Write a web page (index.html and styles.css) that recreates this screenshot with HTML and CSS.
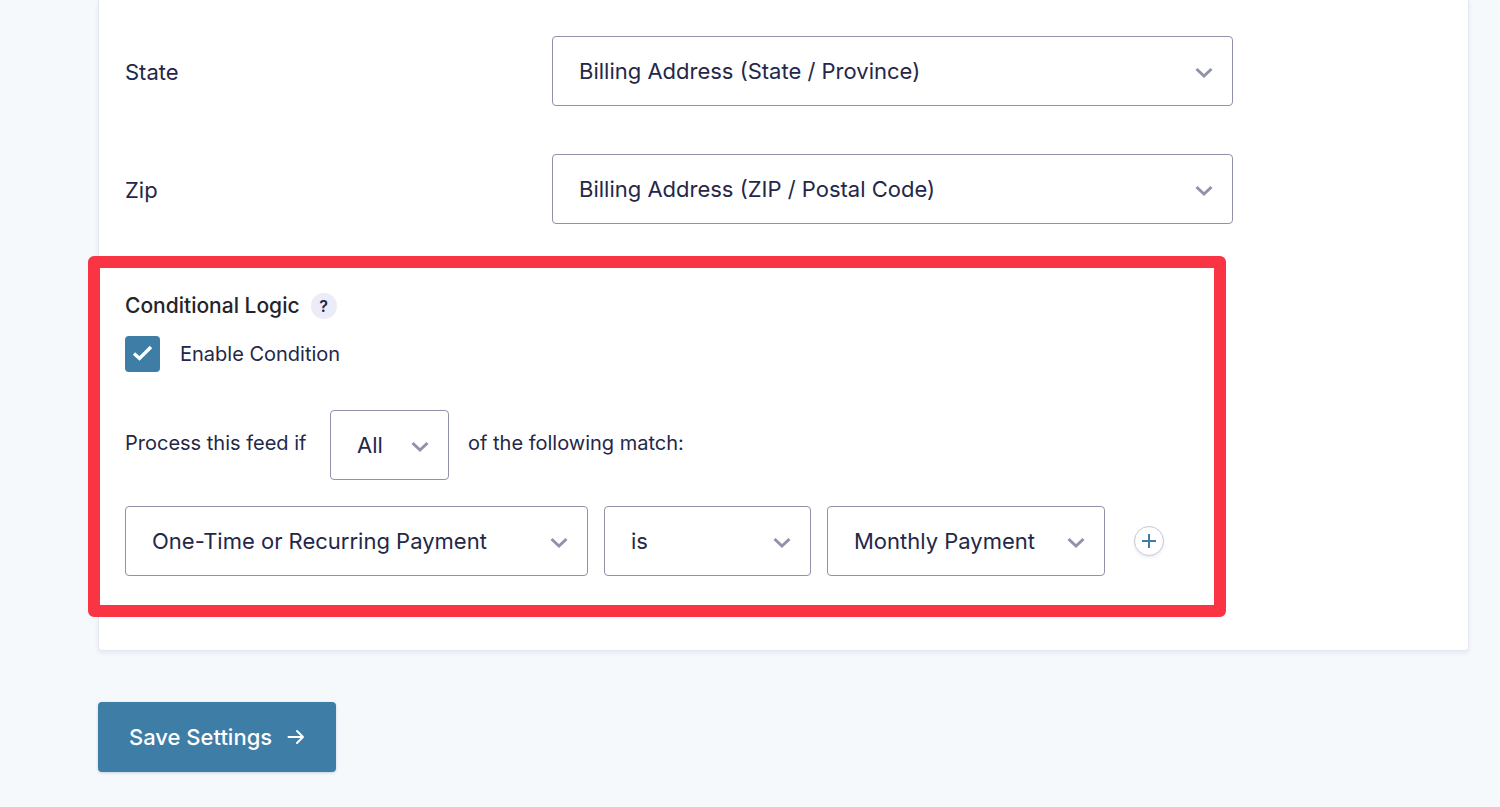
FILE: index.html
```
<!DOCTYPE html>
<html lang="en">
<head>
<meta charset="utf-8">
<meta name="viewport" content="width=device-width, initial-scale=1">
<title>Feed Settings</title>
<link rel="stylesheet" href="styles.css">
</head>
<body>
<svg class="symbols" aria-hidden="true">
  <symbol id="chevron" viewBox="0 0 18 12"><path d="M1.5 2L9 9L16.5 2" fill="none" stroke="currentColor" stroke-width="3"/></symbol>
</svg>
<form class="page">
  <div class="panel">
    <div class="field">
      <label class="field-label" for="state">State</label>
      <div class="select">
        <select id="state"><option>Billing Address (State / Province)</option></select>
        <svg class="chevron" aria-hidden="true"><use href="#chevron"/></svg>
      </div>
    </div>
    <div class="field">
      <label class="field-label" for="zip">Zip</label>
      <div class="select">
        <select id="zip"><option>Billing Address (ZIP / Postal Code)</option></select>
        <svg class="chevron" aria-hidden="true"><use href="#chevron"/></svg>
      </div>
    </div>
    <section class="logic">
      <div class="logic-head">
        <h2 class="logic-title">Conditional Logic</h2>
        <button class="help" type="button" aria-label="Help">?</button>
      </div>
      <div class="enable">
        <span class="tick">
          <input type="checkbox" id="enable" checked>
          <svg viewBox="0 0 35 36" aria-hidden="true"><path d="M9 17.5L14.5 22.5L26 11" fill="none" stroke="#fff" stroke-width="3.4"/></svg>
        </span>
        <label for="enable">Enable Condition</label>
      </div>
      <div class="match">
        <label class="match-text match-lead" for="match">Process this feed if</label>
        <div class="select select-match">
          <select id="match"><option>All</option></select>
          <svg class="chevron" aria-hidden="true"><use href="#chevron"/></svg>
        </div>
        <span class="match-text">of the following match:</span>
      </div>
      <div class="rule">
        <div class="select select-source">
          <select aria-label="Field"><option>One-Time or Recurring Payment</option></select>
          <svg class="chevron" aria-hidden="true"><use href="#chevron"/></svg>
        </div>
        <div class="select select-operator">
          <select aria-label="Operator"><option>is</option></select>
          <svg class="chevron" aria-hidden="true"><use href="#chevron"/></svg>
        </div>
        <div class="select select-value">
          <select aria-label="Value"><option>Monthly Payment</option></select>
          <svg class="chevron" aria-hidden="true"><use href="#chevron"/></svg>
        </div>
        <button class="add" type="button" aria-label="Add rule">
          <svg viewBox="0 0 14 14" aria-hidden="true"><path d="M7 0V14M0 7H14" stroke="currentColor" stroke-width="2"/></svg>
        </button>
      </div>
    </section>
  </div>
  <button class="save" type="submit">Save Settings
    <svg viewBox="0 0 18 16" aria-hidden="true"><path d="M1.5 8H16M10 2L16 8L10 14" fill="none" stroke="currentColor" stroke-width="2" stroke-linecap="round" stroke-linejoin="round"/></svg>
  </button>
</form>
</body>
</html>
```
FILE: styles.css
```
* {
  box-sizing: border-box;
}

body {
  margin: 0;
  background: #f5f9fc;
  color: #242748;
  font-family: Inter, "Liberation Sans", sans-serif;
  font-size: 20px;
  line-height: 28px;
}

button,
select {
  font-family: inherit;
  color: inherit;
}

.symbols {
  display: none;
}

.page {
  padding: 0 31px 35px 98px;
}

.panel {
  margin-bottom: 51px;
  padding: 36px 26px 33px;
  background: #fff;
  border: 1px solid #e3e7f1;
  border-top: 0;
  border-radius: 0 0 4px 4px;
  box-shadow: 0 2px 4px rgba(30, 40, 90, 0.07);
}

.field {
  display: grid;
  grid-template-columns: 427fr 681fr 209fr;
  align-items: center;
  margin-bottom: 48px;
}

.field-label {
  padding-top: 2px;
  font-size: 22px;
}

.select {
  display: grid;
  align-items: center;
  height: 70px;
}

.select > * {
  grid-area: 1 / 1;
}

.select select {
  width: 100%;
  height: 100%;
  padding: 0 48px 0 26px;
  border: 1px solid #9092a9;
  border-radius: 4px;
  background: #fff;
  appearance: none;
  font-size: 22px;
}

.chevron {
  justify-self: end;
  width: 18px;
  height: 12px;
  margin: 4px 20px 0 0;
  color: #9092ac;
  pointer-events: none;
}

.logic {
  margin: -16px 216px 0 -37px;
  padding: 24px 25px 29px;
  border: 12px solid #f93543;
  border-radius: 6px;
}

.logic-head {
  display: flex;
  align-items: center;
  gap: 11px;
}

.logic-title {
  margin: 0;
  color: #242529;
  font-size: 21px;
  font-weight: 500;
}

.help {
  width: 26px;
  height: 26px;
  padding: 0;
  border: 0;
  border-radius: 50%;
  background: #ecebf8;
  font-size: 16px;
  font-weight: 600;
}

.enable {
  display: flex;
  align-items: center;
  gap: 20px;
  margin-top: 16px;
}

.tick {
  display: grid;
  width: 35px;
  height: 36px;
}

.tick > * {
  grid-area: 1 / 1;
  width: 100%;
  height: 100%;
  margin: 0;
}

.tick input {
  appearance: none;
  border-radius: 4px;
  background: #3e7da6;
}

.tick svg {
  pointer-events: none;
}

.match {
  display: flex;
  align-items: center;
  gap: 19px;
  margin: 38px 0 26px;
}

.match-text {
  padding-bottom: 4px;
}

.match-lead {
  min-width: 186px;
}

.select-match {
  width: 119px;
}

.rule {
  display: flex;
  align-items: center;
  gap: 16px;
}

.select-source {
  flex: 0 1 463px;
}

.select-operator {
  flex: 0 1 207px;
}

.select-value {
  flex: 0 1 278px;
}

.add {
  display: grid;
  place-items: center;
  flex: none;
  width: 30px;
  height: 30px;
  margin-left: 13px;
  padding: 0;
  border: 1px solid #c6c8dd;
  border-radius: 50%;
  background: #fff;
  box-shadow: 0 2px 3px rgba(30, 40, 90, 0.08);
  color: #3e7da6;
}

.add svg {
  width: 14px;
  height: 14px;
}

.save {
  display: flex;
  align-items: center;
  gap: 15px;
  height: 70px;
  padding: 0 31px;
  border: 0;
  border-radius: 4px;
  background: #3e7da6;
  box-shadow: 0 1px 3px rgba(30, 60, 120, 0.2);
  color: #fff;
  font-size: 22px;
  font-weight: 500;
}

.save svg {
  width: 18px;
  height: 16px;
}
```
